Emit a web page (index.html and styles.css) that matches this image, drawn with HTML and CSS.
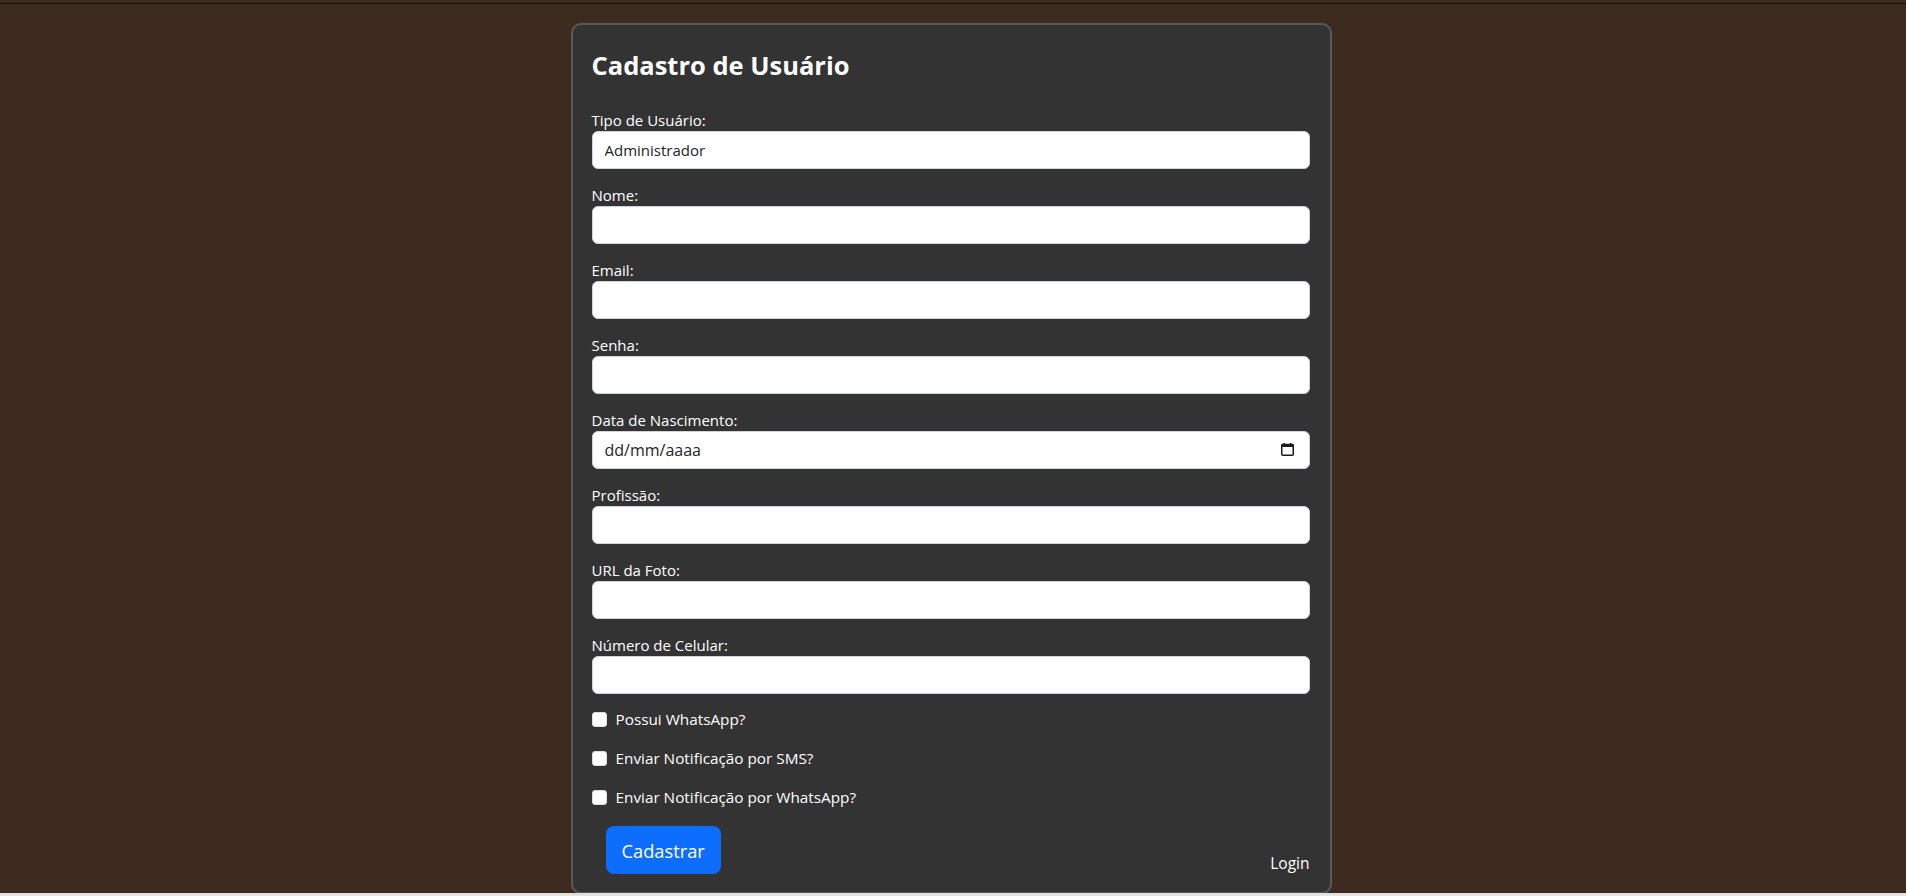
FILE: index.html
```html
<!DOCTYPE html>
<html lang="pt-BR">
<head>
<meta charset="utf-8">
<title>Cadastro de Usuário</title>
<link rel="stylesheet" href="styles.css">
</head>
<body>
<div class="topbar"></div>
<main class="page">
  <section class="card">
    <h2 class="title">Cadastro de Usuário</h2>
    <form class="form">
      <div class="group">
        <label class="label" for="tipo">Tipo de Usuário:</label>
        <select class="control select" id="tipo"><option>Administrador</option></select>
      </div>
      <div class="group">
        <label class="label" for="nome">Nome:</label>
        <input class="control" id="nome" type="text">
      </div>
      <div class="group">
        <label class="label" for="email">Email:</label>
        <input class="control" id="email" type="email">
      </div>
      <div class="group">
        <label class="label" for="senha">Senha:</label>
        <input class="control" id="senha" type="password">
      </div>
      <div class="group">
        <label class="label" for="nasc">Data de Nascimento:</label>
        <div class="date-wrap">
          <input class="control date" id="nasc" type="text" placeholder="dd/mm/aaaa">
          <svg class="cal" width="13" height="13" viewBox="0 0 13 13" aria-hidden="true">
            <rect x="0.75" y="1.5" width="11.5" height="10.75" rx="1" fill="none" stroke="#1a1a1a" stroke-width="1.5"/>
            <rect x="0.5" y="1" width="12" height="3" fill="#1a1a1a"/>
            <rect x="2.5" y="0" width="1.5" height="2" fill="#1a1a1a"/>
            <rect x="9" y="0" width="1.5" height="2" fill="#1a1a1a"/>
          </svg>
        </div>
      </div>
      <div class="group">
        <label class="label" for="prof">Profissão:</label>
        <input class="control" id="prof" type="text">
      </div>
      <div class="group">
        <label class="label" for="foto">URL da Foto:</label>
        <input class="control" id="foto" type="url">
      </div>
      <div class="group group-last">
        <label class="label" for="cel">Número de Celular:</label>
        <input class="control" id="cel" type="tel">
      </div>
      <div class="check">
        <input class="box" id="c1" type="checkbox">
        <label for="c1">Possui WhatsApp?</label>
      </div>
      <div class="check">
        <input class="box" id="c2" type="checkbox">
        <label for="c2">Enviar Notificação por SMS?</label>
      </div>
      <div class="check check-last">
        <input class="box" id="c3" type="checkbox">
        <label for="c3">Enviar Notificação por WhatsApp?</label>
      </div>
      <div class="actions">
        <button class="btn" type="button">Cadastrar</button>
        <a class="login" href="#">Login</a>
      </div>
    </form>
  </section>
</main>
<div class="foot"></div>
</body>
</html>
```
FILE: styles.css
```css
* { box-sizing: border-box; }
html, body { margin: 0; padding: 0; }
body {
  font-family: "Open Sans", "Noto Sans", sans-serif;
  background: #e6e6e6;
  color: #fff;
  font-size: 15px;
}
.topbar {
  height: 4px;
  background: #3d2b1f;
  border-bottom: 1px solid #111;
}
.page {
  background: #3d2b1f;
  height: 889px;
  display: flex;
  justify-content: center;
  padding: 19px 4px 0 0;
  overflow: hidden;
}
.card {
  width: 761px;
  background: #333;
  border: 2px solid #595959;
  border-radius: 10px;
  padding: 22px 20px 18px 19px;
  align-self: flex-start;
}
.title {
  margin: 0 0 26px;
  font-size: 25.5px;
  font-weight: 700;
  line-height: 36px;
}
.form { display: flex; flex-direction: column; }
.group { display: flex; flex-direction: column; margin-bottom: 15px; }
.group-last { margin-bottom: 13px; }
.label { line-height: 22px; font-size: 15px; }
.control {
  height: 38px;
  width: 100%;
  border: 1px solid #ced4da;
  border-radius: 6px;
  background: #fff;
  padding: 0 12px;
  font-family: inherit;
  font-size: 15px;
  color: #212529;
}
.select { appearance: none; -webkit-appearance: none; }
.date-wrap { position: relative; }
.date { font-size: 16px; }
.date::placeholder { color: #212529; opacity: 1; }
.cal { position: absolute; right: 16px; top: 12px; }
.check {
  display: flex;
  align-items: center;
  gap: 9px;
  height: 24px;
  margin-bottom: 15px;
  font-size: 15.3px;
}
.check-last { margin-bottom: 17px; }
.box {
  appearance: none;
  -webkit-appearance: none;
  width: 15px;
  height: 15px;
  margin: 0;
  background: #fff;
  border: 1px solid #ddd;
  border-radius: 3px;
}
.actions {
  display: flex;
  justify-content: space-between;
  align-items: flex-end;
}
.btn {
  margin-left: 14px;
  height: 48px;
  padding: 0 16px;
  background: #0d6efd;
  border: none;
  border-radius: 8px;
  color: #fff;
  font-family: inherit;
  font-size: 18.3px;
}
.login {
  color: #fff;
  text-decoration: none;
  line-height: 22px;
  font-size: 15.5px;
}
.foot { height: 2px; background: #e0e0e0; }
```
